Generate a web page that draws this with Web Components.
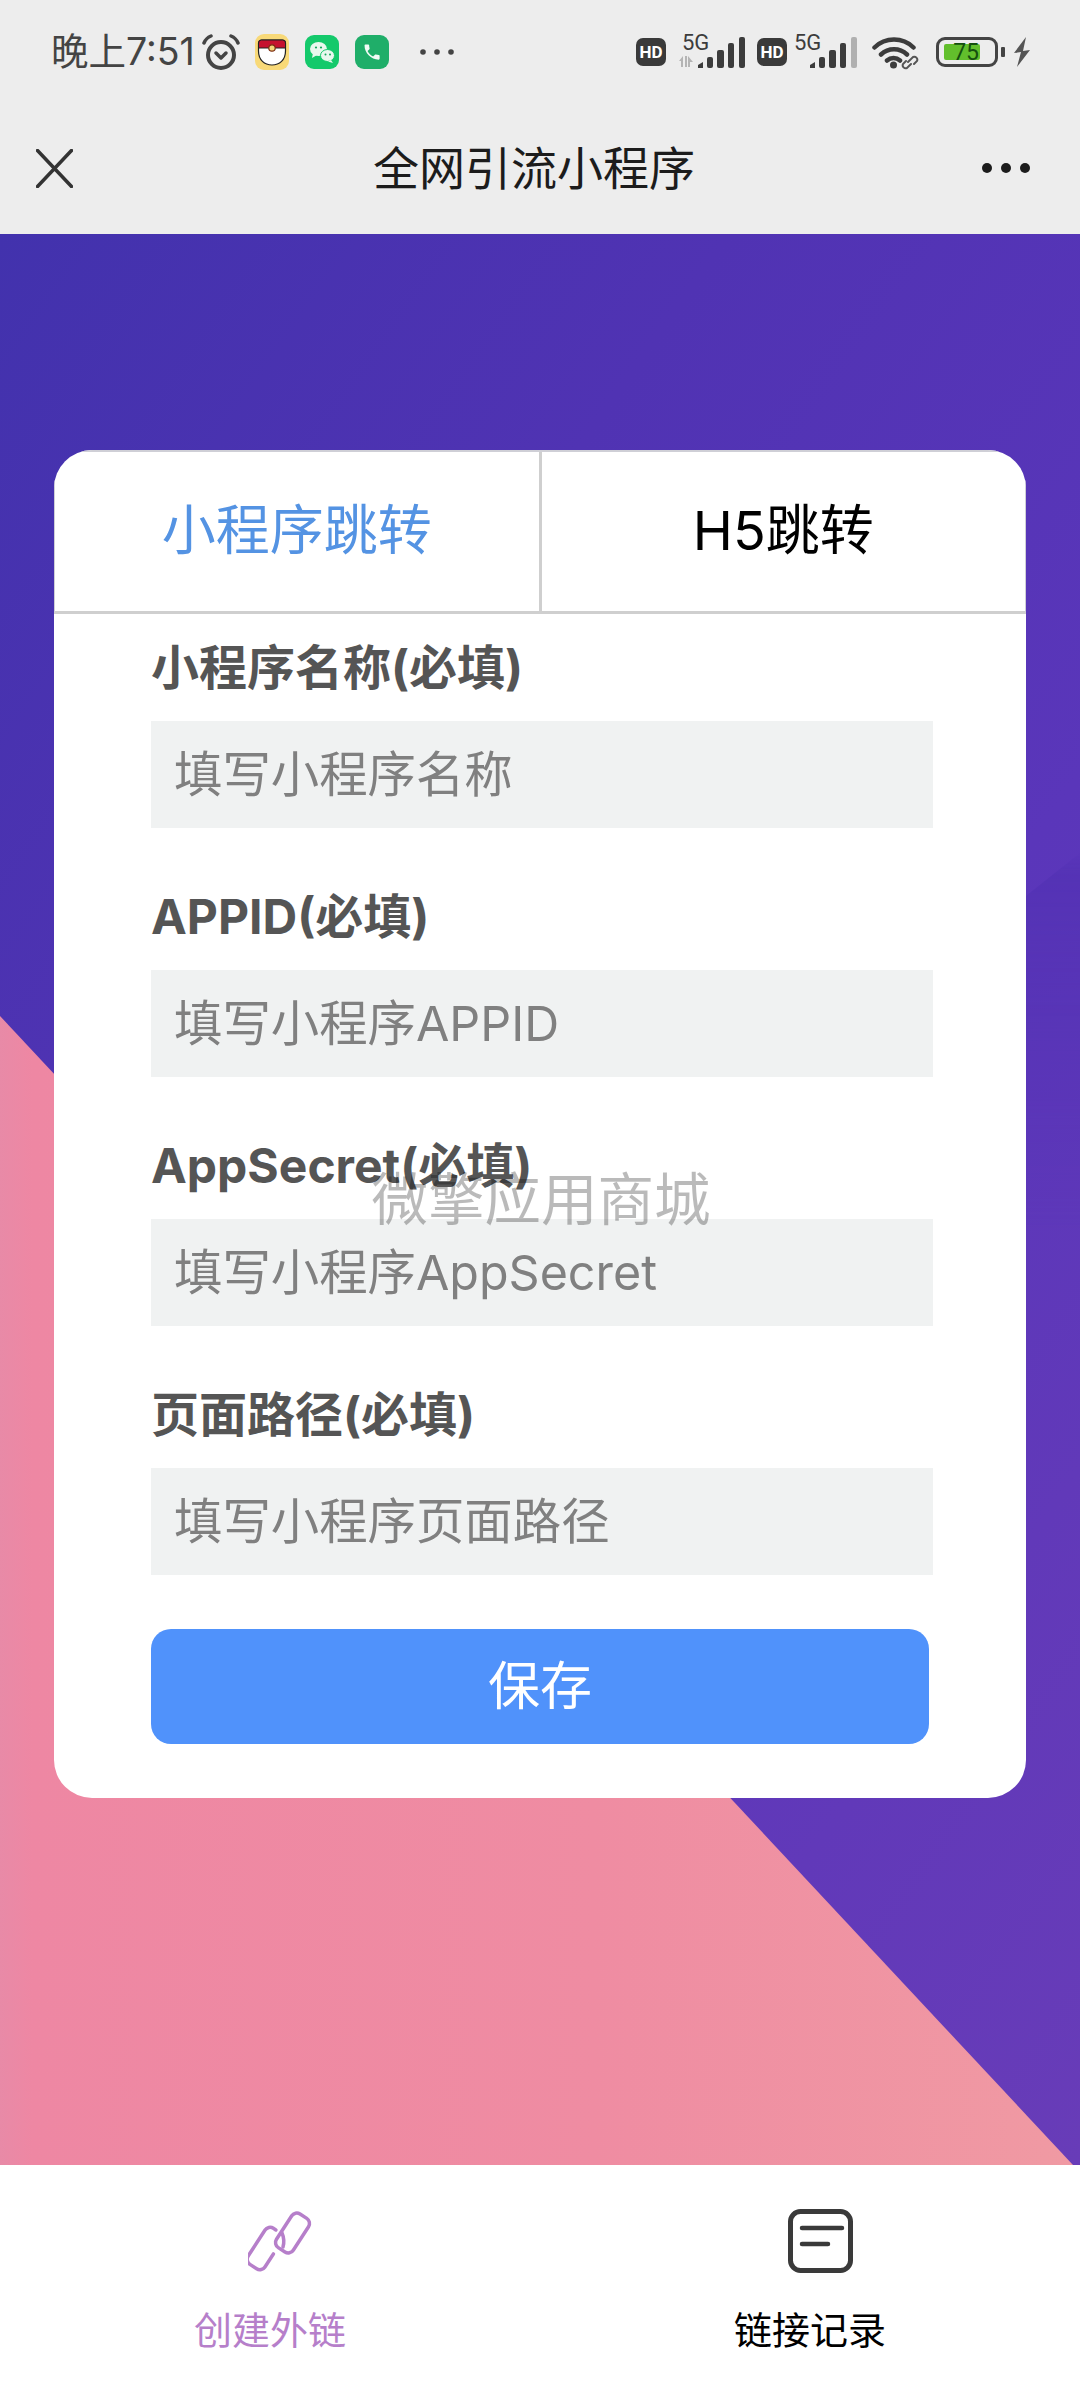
<!DOCTYPE html>
<html lang="zh-CN">
<head>
<meta charset="utf-8">
<title>全网引流小程序</title>
<style>
  html, body { margin: 0; padding: 0; }
  body {
    width: 1080px;
    height: 2400px;
    display: flex;
    flex-direction: column;
    overflow: hidden;
    font-family: Inter, "Noto Sans CJK SC", sans-serif;
  }
</style>
</head>
<body>
  <status-bar></status-bar>
  <nav-header>全网引流小程序</nav-header>

  <page-backdrop>
    <form-card>
      <tab-switch>
        <tab-item active>小程序跳转</tab-item>
        <tab-item>H5跳转</tab-item>
      </tab-switch>
      <form-field><span slot="label">小程序名称(必填)</span>填写小程序名称</form-field>
      <form-field><span slot="label">APPID(必填)</span>填写小程序APPID</form-field>
      <form-field><span slot="label">AppSecret(必填)</span>填写小程序AppSecret</form-field>
      <form-field><span slot="label">页面路径(必填)</span>填写小程序页面路径</form-field>
      <save-button>保存</save-button>
    </form-card>
  </page-backdrop>

  <bottom-tabs>
    <bottom-tab active icon="link">创建外链</bottom-tab>
    <bottom-tab icon="record">链接记录</bottom-tab>
  </bottom-tabs>

  <water-mark>微擎应用商城</water-mark>

<script>
  // small helper so every component below reads the same way
  function shadow(el, html) {
    const root = el.attachShadow({ mode: 'open' });
    const template = document.createElement('template');
    template.innerHTML = html;
    root.appendChild(template.content.cloneNode(true));
  }

  // one SIM: 5G tag, optional data arrows, five bars
  class SimSignal extends HTMLElement {
    constructor() {
      super();
      const data = this.hasAttribute('data');
      const weak = this.hasAttribute('weak');
      shadow(this, `
        <style>
          :host { display: block; width: 66px; height: 44px; }
          svg { display: block; }
          text { font: 22px Roboto, sans-serif; fill: #3c3c3c; }
        </style>
        <svg width="66" height="44" viewBox="0 -2 66 44">
          <text x="3" y="18">5G</text>
          ${data ? '<path d="M0 29l4-5v11H2v-6zM6 24h2v11H6zM9 24l5 6h-3v5H9z" fill="#b4b4b4"/>' : ''}
          <path d="M19 33l5-3v6h-5z" fill="#3c3c3c"/>
          <rect x="28" y="25" width="6" height="11" rx="2" fill="#3c3c3c"/>
          <rect x="38" y="18" width="7" height="18" rx="2" fill="#3c3c3c"/>
          <rect x="49" y="11" width="6" height="25" rx="2" fill="#3c3c3c"/>
          <rect x="60" y="5" width="6" height="31" rx="2" fill="${weak ? '#b0b0b0' : '#3c3c3c'}"/>
        </svg>
      `);
    }
  }
  customElements.define('sim-signal', SimSignal);

  class StatusBar extends HTMLElement {
    constructor() {
      super();
      shadow(this, `
        <style>
          :host {
            display: flex;
            align-items: center;
            box-sizing: border-box;
            height: 104px;
            padding: 0 50px 0 51px;
            background: #ededed;
            color: #444;
          }
          svg { display: block; flex: none; }
          .time { width: 141px; font-size: 37.500px; white-space: nowrap; line-height: 44px; }
          .alarm { margin-left: 10px; }
          .poke { margin-left: 15px; }
          .chat, .phone { margin-left: 16px; }
          .more { margin-left: 31px; }
          .right { display: flex; align-items: center; margin-left: auto; }
          .hd {
            width: 30px;
            height: 28px;
            display: flex;
            align-items: center;
            justify-content: center;
            border-radius: 7px;
            background: #3a3a3a;
            color: #fff;
            font: 700 17px Roboto, sans-serif;
          }
          .sim1 { margin-left: 13px; }
          .hd2 { margin-left: 12px; }
          .sim2 { margin-left: 4px; }
          .wifi { margin-left: 15px; }
          .battery {
            box-sizing: border-box;
            width: 62px;
            height: 30px;
            margin-left: 16px;
            padding: 4px 5px;
            border: 3.5px solid #444;
            border-radius: 9px;
          }
          .fill {
            width: 36px;
            height: 100%;
            display: flex;
            align-items: center;
            justify-content: flex-end;
            padding-right: 1px;
            box-sizing: border-box;
            border-radius: 2px;
            background: #62bf2c;
            color: #14500f;
            font: 23px Roboto, sans-serif;
          }
          .cap { width: 4px; height: 10px; margin-left: 3px; border-radius: 1px; background: #444; }
          .bolt { margin-left: 8px; }
        </style>
        <span class="time">晚上7:51</span>
        <svg class="alarm" width="38" height="36" viewBox="0 0 38 36" fill="none" stroke="#444" stroke-linecap="round">
          <circle cx="19" cy="21" r="13" stroke-width="4"/>
          <path d="M2 9Q4 4 9 2M29 2q5 2 7 7" stroke-width="3.500"/>
          <path d="M14 19l5 5 5-5" stroke-width="3.500" stroke-linejoin="round"/>
        </svg>
        <svg class="poke" width="34" height="36" viewBox="0 0 34 36">
          <rect width="34" height="36" rx="9" fill="#f8d978"/>
          <path d="M3.500 9a3 3 0 0 1 3-3h21a3 3 0 0 1 3 3v8c0 9-6 14-13.500 14s-13.500-5-13.500-14z" fill="#fff" stroke="#222" stroke-width="1.200"/>
          <path d="M3.500 14V9a3 3 0 0 1 3-3h21a3 3 0 0 1 3 3v5z" fill="#c5112f" stroke="#222" stroke-width="1"/>
          <circle cx="17" cy="14" r="3.200" fill="#f3d57a" stroke="#7a2a10" stroke-width="1.200"/>
        </svg>
        <svg class="chat" width="34" height="34" viewBox="0 0 34 34">
          <rect width="34" height="34" rx="9" fill="#14c96b"/>
          <ellipse cx="13.500" cy="14" rx="8.500" ry="7" fill="#e8f8ee"/>
          <path d="M8 18l-1 5 5-3z" fill="#e8f8ee"/>
          <ellipse cx="22.500" cy="20.500" rx="7" ry="6" fill="#e8f8ee" stroke="#14c96b" stroke-width="1"/>
          <path d="M26 25l2 3-5-1.500z" fill="#e8f8ee"/>
          <circle cx="11" cy="12.500" r="1.100" fill="#14a75c"/><circle cx="16" cy="12.500" r="1.100" fill="#14a75c"/>
          <circle cx="20.500" cy="19.500" r="1" fill="#14a75c"/><circle cx="25" cy="19.500" r="1" fill="#14a75c"/>
        </svg>
        <svg class="phone" width="34" height="34" viewBox="0 0 34 34">
          <rect width="34" height="34" rx="9" fill="#1fae69"/>
          <path transform="translate(7 7) scale(.84)" fill="#f2fbf6" d="M6.620 10.790c1.440 2.830 3.760 5.140 6.590 6.590l2.200-2.200c.27-.27.67-.36 1.020-.24 1.120.37 2.330.57 3.570.57.55 0 1 .45 1 1V20c0 .55-.45 1-1 1-9.390 0-17-7.610-17-17 0-.55.45-1 1-1h3.500c.55 0 1 .45 1 1 0 1.250.2 2.450.57 3.570.11.35.03.74-.25 1.020l-2.200 2.200z"/>
        </svg>
        <svg class="more" width="34" height="8" viewBox="0 0 34 8" fill="#444">
          <circle cx="3" cy="4" r="2.800"/><circle cx="17" cy="4" r="2.800"/><circle cx="31" cy="4" r="2.800"/>
        </svg>
        <div class="right">
          <div class="hd">HD</div>
          <sim-signal class="sim1" data></sim-signal>
          <div class="hd hd2">HD</div>
          <sim-signal class="sim2" weak></sim-signal>
          <svg class="wifi" width="48" height="36" viewBox="0 0 48 36" fill="none" stroke="#3c3c3c" stroke-linecap="round">
            <path d="M2.500 13.500a28 28 0 0 1 39 0M9 20.500a19 19 0 0 1 26 0M15 26.500a10 10 0 0 1 13 0" stroke-width="4.500"/>
            <circle cx="21.500" cy="31" r="3.500" fill="#3c3c3c" stroke="none"/>
            <path d="M36 28l5-5a3 3 0 0 1 4 4l-3 3M39 30l-4 4a3 3 0 0 1-4-4l3-3" stroke-width="2" stroke="#555"/>
          </svg>
          <div class="battery"><div class="fill">75</div></div>
          <div class="cap"></div>
          <svg class="bolt" width="17" height="30" viewBox="0 0 17 30" fill="#555">
            <polygon points="13,0 1,16 8,15 4,30 17,13 10,14"/>
          </svg>
        </div>
      `);
    }
  }
  customElements.define('status-bar', StatusBar);

  class NavHeader extends HTMLElement {
    constructor() {
      super();
      shadow(this, `
        <style>
          :host {
            display: flex;
            align-items: center;
            justify-content: space-between;
            box-sizing: border-box;
            height: 130px;
            padding: 0 50px 2px 36px;
            background: #ededed;
            color: #1c1c1c;
            font-size: 46px;
          }
          .title { margin-left: 13px; line-height: 60px; }
          svg { display: block; }
        </style>
        <svg width="37" height="39" viewBox="0 0 37 39" stroke="#333" stroke-width="3.500" stroke-linecap="round">
          <path d="M1.500 1.500l34 36M35.500 1.500l-34 36"/>
        </svg>
        <div class="title"><slot></slot></div>
        <svg width="48" height="12" viewBox="0 0 48 12" fill="#1c1c1c">
          <circle cx="5" cy="6" r="5"/><circle cx="24" cy="6" r="5"/><circle cx="43" cy="6" r="5"/>
        </svg>
      `);
    }
  }
  customElements.define('nav-header', NavHeader);

  // purple field with the pink wedge cut across its lower left
  class PageBackdrop extends HTMLElement {
    constructor() {
      super();
      shadow(this, `
        <style>
          :host {
            display: block;
            position: relative;
            flex: 1;
            box-sizing: border-box;
            padding: 216px 54px 0;
            background: linear-gradient(125deg, #4232ad 0%, #5033b3 30%, #5a36ba 60%, #683cb8 100%);
          }
          .fold {
            position: absolute;
            inset: 0;
            background: #4f30b1;
            opacity: .45;
            clip-path: polygon(1080px 619px, 1026px 662px, 1026px 1000px, 1080px 1000px);
            -webkit-mask-image: linear-gradient(180deg, transparent 619px, #000 640px, transparent 1000px);
          }
          .wedge {
            position: absolute;
            inset: 0;
            background: linear-gradient(90deg, #e88aa7 0, #ee87a3 3%, #ef8ca2 55%, #f09aa3 100%);
            clip-path: polygon(0 782px, 1073px 1931px, 0 1931px);
          }
          .content { position: relative; }
        </style>
        <div class="fold"></div>
        <div class="wedge"></div>
        <div class="content"><slot></slot></div>
      `);
    }
  }
  customElements.define('page-backdrop', PageBackdrop);

  class FormCard extends HTMLElement {
    constructor() {
      super();
      shadow(this, `
        <style>
          :host {
            display: block;
            box-sizing: border-box;
            width: 972px;
            height: 1348px;
            border-radius: 38px;
            overflow: hidden;
            background: #fff;
          }
        </style>
        <slot></slot>
      `);
    }
  }
  customElements.define('form-card', FormCard);

  class TabSwitch extends HTMLElement {
    constructor() {
      super();
      shadow(this, `
        <style>
          :host {
            display: flex;
            box-sizing: border-box;
            height: 164px;
            margin-bottom: -2px;
            border: 1px solid #cfcfd6;
            border-top-width: 2px;
            border-bottom: 3px solid #cfcfcf;
          }
        </style>
        <slot></slot>
      `);
    }
  }
  customElements.define('tab-switch', TabSwitch);

  class TabItem extends HTMLElement {
    constructor() {
      super();
      shadow(this, `
        <style>
          :host {
            flex: 1;
            display: flex;
            align-items: center;
            justify-content: center;
            box-sizing: border-box;
            padding-bottom: 10px;
            font-size: 54px;
            color: #000;
          }
          :host([active]) { color: #5493e3; border-right: 3px solid #cfcfcf; }
        </style>
        <slot></slot>
      `);
    }
  }
  customElements.define('tab-item', TabItem);

  class FormField extends HTMLElement {
    constructor() {
      super();
      shadow(this, `
        <style>
          :host {
            display: block;
            box-sizing: border-box;
            width: 782px;
            margin-left: 97px;
            padding: 24px 0 33px;
          }
          .label {
            height: 64px;
            line-height: 64px;
            margin-bottom: 21px;
            font-size: 48px;
            font-weight: 700;
            color: #555;
            white-space: nowrap;
          }
          .box {
            display: flex;
            align-items: center;
            box-sizing: border-box;
            height: 107px;
            padding: 0 23px 8px;
            background: #f0f2f2;
            font-size: 48.400px;
            color: #808080;
            white-space: nowrap;
          }
        </style>
        <div class="label"><slot name="label"></slot></div>
        <div class="box"><slot></slot></div>
      `);
    }
  }
  customElements.define('form-field', FormField);

  class SaveButton extends HTMLElement {
    constructor() {
      super();
      shadow(this, `
        <style>
          :host {
            display: flex;
            align-items: center;
            justify-content: center;
            box-sizing: border-box;
            width: 778px;
            height: 115px;
            margin: 21px 0 0 97px;
            padding-bottom: 8px;
            border-radius: 20px;
            background: #5092fb;
            color: #fff;
            font-size: 52px;
          }
        </style>
        <slot></slot>
      `);
    }
  }
  customElements.define('save-button', SaveButton);

  class BottomTabs extends HTMLElement {
    constructor() {
      super();
      shadow(this, `
        <style>
          :host { display: flex; height: 235px; background: #fff; }
        </style>
        <slot></slot>
      `);
    }
  }
  customElements.define('bottom-tabs', BottomTabs);

  const TAB_ICONS = {
    link: `
      <g fill="none" stroke="currentColor" stroke-width="3.500" stroke-linecap="round">
        <rect x="-10" y="-20" width="20" height="40" rx="6" transform="translate(44.500 24) rotate(33)"/>
        <path d="M-1-21.500H-4a6 6 0 0 0-6 6V15.500a6 6 0 0 0 6 6H4a6 6 0 0 0 6-6V0" transform="translate(17 39.500) rotate(33)"/>
        <path d="M34 24q3 7 1 14"/>
      </g>`,
    record: `
      <g fill="none" stroke="#3a3a3a" stroke-linecap="round">
        <rect x="2.500" y="2.500" width="60" height="59" rx="10" stroke-width="5"/>
        <path d="M14 19H54M14 35H40" stroke-width="4.500"/>
      </g>`
  };

  class BottomTab extends HTMLElement {
    constructor() {
      super();
      shadow(this, `
        <style>
          :host {
            flex: 1;
            display: flex;
            flex-direction: column;
            align-items: center;
            box-sizing: border-box;
            padding-top: 44px;
            color: #000;
            font-size: 38px;
          }
          :host([active]) { color: #b67fca; }
          svg { display: block; margin-left: 20px; }
          .label { margin-top: 32px; line-height: 50px; }
        </style>
        <svg width="65" height="64" viewBox="0 0 65 64">${TAB_ICONS[this.getAttribute('icon')]}</svg>
        <div class="label"><slot></slot></div>
      `);
    }
  }
  customElements.define('bottom-tab', BottomTab);

  // translucent mark floating over the middle of the page
  class WaterMark extends HTMLElement {
    constructor() {
      super();
      shadow(this, `
        <style>
          :host {
            position: fixed;
            left: 0;
            right: 0;
            top: 1155px;
            height: 80px;
            display: flex;
            align-items: center;
            justify-content: center;
            padding-left: 2px;
            font-size: 56.500px;
            color: rgba(0, 0, 0, .27);
            pointer-events: none;
          }
        </style>
        <slot></slot>
      `);
    }
  }
  customElements.define('water-mark', WaterMark);
</script>
</body>
</html>
